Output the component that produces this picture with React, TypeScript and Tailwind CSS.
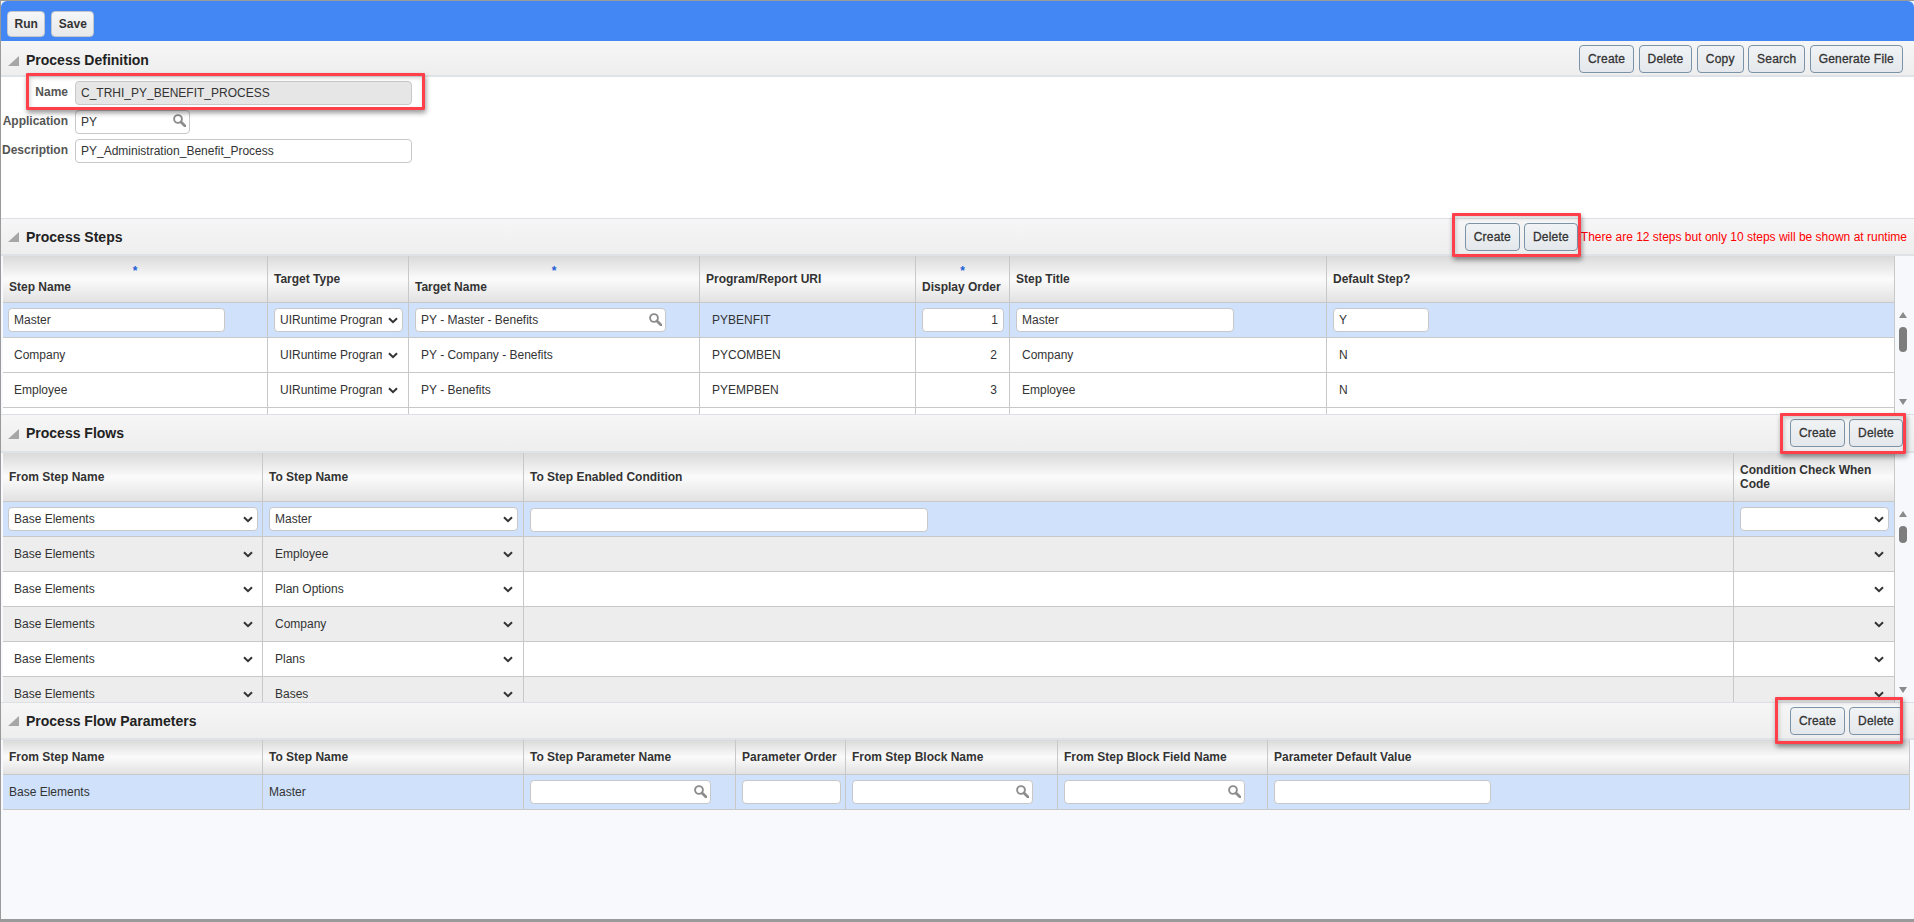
import type { ReactNode } from 'react';

const CELL_LINE = 'border-r border-b border-[#c8c8c8]';
const SELECTED = 'bg-[#cfe1fb]';

function Btn({ children }: { children: ReactNode }) {
  return (
    <button
      type="button"
      className="h-[28px] shrink-0 rounded-[4px] border border-[#7b93a8] bg-gradient-to-b from-[#f1f3f5] to-[#e4e8ec] px-[8px] text-[12px] tracking-[0.2px] text-[#333] [-webkit-text-stroke:0.3px_#333]"
    >
      {children}
    </button>
  );
}

function TopBtn({ children }: { children: ReactNode }) {
  return (
    <button
      type="button"
      className="h-[26px] rounded-[4px] border border-[#c4c8cc] bg-gradient-to-b from-[#f5f6f7] to-[#e6e8ea] px-[6.5px] text-[12px] font-bold text-[#333]"
    >
      {children}
    </button>
  );
}

function Arrow() {
  return (
    <svg width="11" height="10" viewBox="0 0 11 10" className="shrink-0">
      <polygon points="11,0 11,10 0,10" fill="#a6a6a6" />
    </svg>
  );
}

function SearchIcon() {
  return (
    <svg width="13" height="13" viewBox="0 0 13 13" className="absolute right-[4px] top-[5px]">
      <circle cx="5" cy="5" r="3.9" fill="none" stroke="#8c8c8c" strokeWidth="1.9" />
      <line x1="8" y1="8" x2="12" y2="12" stroke="#8c8c8c" strokeWidth="2.8" strokeLinecap="round" />
    </svg>
  );
}

function Chevron({ className = '' }: { className?: string }) {
  return (
    <svg width="10" height="7" viewBox="0 0 10 7" className={`shrink-0 ${className}`}>
      <path d="M1 1.2 L5 5.2 L9 1.2" fill="none" stroke="#333" strokeWidth="2" />
    </svg>
  );
}

function Field({
  value = '',
  width,
  search,
  right,
  disabled,
}: {
  value?: string;
  width: string;
  search?: boolean;
  right?: boolean;
  disabled?: boolean;
}) {
  return (
    <div className={`relative h-[24px] ${width}`}>
      <input
        readOnly
        value={value}
        className={`h-full w-full rounded-[4px] border border-[#c8c8c8] px-[5px] text-[12px] text-[#333] outline-none ${
          disabled ? 'bg-[#e6e6e6]' : 'bg-white'
        } ${right ? 'text-right' : ''}`}
      />
      {search && <SearchIcon />}
    </div>
  );
}

// Dropdown: boxed when the row is selected, bare text + chevron otherwise
function Dropdown({ value = '', boxed, width }: { value?: string; boxed?: boolean; width: string }) {
  return (
    <div
      className={`flex h-[24px] items-center rounded-[4px] border pl-[5px] pr-[4px] text-[12px] text-[#333] ${width} ${
        boxed ? 'border-[#c8c8c8] bg-white' : 'border-transparent'
      }`}
    >
      <span className="min-w-0 flex-1 overflow-hidden whitespace-nowrap">{value}</span>
      <Chevron className="ml-[6px]" />
    </div>
  );
}

function SectionBar({
  title,
  height,
  topLine,
  children,
}: {
  title: string;
  height: string;
  topLine?: boolean;
  children?: ReactNode;
}) {
  return (
    <div
      className={`flex shrink-0 items-center justify-between border-b-2 border-[#dfe3e8] bg-gradient-to-b from-[#f6f6f6] to-[#eeeeee] pl-[7px] pr-[11px] ${height} ${
        topLine ? 'border-t border-t-[#dcdfe3]' : 'pt-[2px]'
      }`}
    >
      <div className={`flex items-center gap-[7px] ${topLine ? 'pt-px' : 'pt-[3px]'}`}>
        <Arrow />
        <h2 className="text-[14px] font-bold text-[#222]">{title}</h2>
      </div>
      {children}
    </div>
  );
}

function HeadCell({ children, required }: { children: ReactNode; required?: boolean }) {
  return (
    <th
      className={`${CELL_LINE} bg-gradient-to-b from-[#dadada] via-[#fbfbfb] to-[#e2e2e2] px-[6px] text-left align-middle text-[12px] leading-[14px] font-bold text-[#333]`}
    >
      {required && <div className="h-[16px] text-center text-[12px] leading-[14px] text-[#1f5fd8]">*</div>}
      {children}
    </th>
  );
}

function Scrollbar({ top, thumb }: { top: string; thumb: string }) {
  return (
    <div className={`flex w-[19px] shrink-0 flex-col bg-[#f6f8fc] pb-[9px] pl-[4px] ${top}`}>
      <svg width="8" height="6" viewBox="0 0 8 6">
        <polygon points="4,0 8,6 0,6" fill="#8a8a8a" />
      </svg>
      <div className={`mt-[9px] w-[8px] rounded-full bg-[#7d7d7d] ${thumb}`} />
      <div className="flex-1" />
      <svg width="8" height="6" viewBox="0 0 8 6">
        <polygon points="0,0 8,0 4,6" fill="#8a8a8a" />
      </svg>
    </div>
  );
}

function RedBox({ className }: { className: string }) {
  return (
    <div
      className={`pointer-events-none absolute rounded-[1px] border-[3px] border-[#ff3f49] shadow-[1px_3px_5px_rgba(0,0,0,0.4),inset_1px_2px_4px_rgba(0,0,0,0.18)] ${className}`}
    />
  );
}

const stepRows = [
  { name: 'Company', target: 'PY - Company - Benefits', uri: 'PYCOMBEN', order: '2', title: 'Company', def: 'N' },
  { name: 'Employee', target: 'PY - Benefits', uri: 'PYEMPBEN', order: '3', title: 'Employee', def: 'N' },
];

const flowRows = ['Employee', 'Plan Options', 'Company', 'Plans', 'Bases'];

function StepsTable() {
  return (
    <table className="w-[1892px] table-fixed border-separate border-spacing-0">
      <colgroup>
        <col className="w-[265px]" />
        <col className="w-[141px]" />
        <col className="w-[291px]" />
        <col className="w-[216px]" />
        <col className="w-[94px]" />
        <col className="w-[317px]" />
        <col className="w-[568px]" />
      </colgroup>
      <thead>
        <tr className="h-[47px]">
          <HeadCell required>Step Name</HeadCell>
          <HeadCell>Target Type</HeadCell>
          <HeadCell required>Target Name</HeadCell>
          <HeadCell>Program/Report URI</HeadCell>
          <HeadCell required>Display Order</HeadCell>
          <HeadCell>Step Title</HeadCell>
          <HeadCell>Default Step?</HeadCell>
        </tr>
      </thead>
      <tbody className="text-[12px] text-[#333]">
        <tr className={`h-[35px] ${SELECTED}`}>
          <td className={`${CELL_LINE} pl-[5px]`}><Field value="Master" width="w-[217px]" /></td>
          <td className={`${CELL_LINE} pl-[6px]`}><Dropdown value="UIRuntime Program" boxed width="w-[129px]" /></td>
          <td className={`${CELL_LINE} pl-[6px]`}><Field value="PY - Master - Benefits" search width="w-[251px]" /></td>
          <td className={`${CELL_LINE} pl-[12px]`}>PYBENFIT</td>
          <td className={`${CELL_LINE} pl-[6px]`}><Field value="1" right width="w-[82px]" /></td>
          <td className={`${CELL_LINE} pl-[6px]`}><Field value="Master" width="w-[218px]" /></td>
          <td className={`${CELL_LINE} pl-[6px]`}><Field value="Y" width="w-[96px]" /></td>
        </tr>
        {stepRows.map((row) => (
          <tr key={row.name} className="h-[35px] bg-white">
            <td className={`${CELL_LINE} pl-[11px]`}>{row.name}</td>
            <td className={`${CELL_LINE} pl-[6px]`}><Dropdown value="UIRuntime Program" width="w-[129px]" /></td>
            <td className={`${CELL_LINE} pl-[12px]`}>{row.target}</td>
            <td className={`${CELL_LINE} pl-[12px]`}>{row.uri}</td>
            <td className={`${CELL_LINE} pr-[12px] text-right`}>{row.order}</td>
            <td className={`${CELL_LINE} pl-[12px]`}>{row.title}</td>
            <td className={`${CELL_LINE} pl-[12px]`}>{row.def}</td>
          </tr>
        ))}
        <tr className="h-[35px] bg-white">
          <td className={CELL_LINE} />
          <td className={CELL_LINE} />
          <td className={CELL_LINE} />
          <td className={CELL_LINE} />
          <td className={CELL_LINE} />
          <td className={CELL_LINE} />
          <td className={CELL_LINE} />
        </tr>
      </tbody>
    </table>
  );
}

function FlowsTable() {
  return (
    <table className="w-[1892px] table-fixed border-separate border-spacing-0">
      <colgroup>
        <col className="w-[260px]" />
        <col className="w-[261px]" />
        <col className="w-[1210px]" />
        <col className="w-[161px]" />
      </colgroup>
      <thead>
        <tr className="h-[49px]">
          <HeadCell>From Step Name</HeadCell>
          <HeadCell>To Step Name</HeadCell>
          <HeadCell>To Step Enabled Condition</HeadCell>
          <HeadCell>Condition Check When Code</HeadCell>
        </tr>
      </thead>
      <tbody>
        <tr className={`h-[35px] ${SELECTED}`}>
          <td className={`${CELL_LINE} pl-[5px]`}><Dropdown value="Base Elements" boxed width="w-[250px]" /></td>
          <td className={`${CELL_LINE} pl-[6px]`}><Dropdown value="Master" boxed width="w-[249px]" /></td>
          <td className={`${CELL_LINE} pl-[6px]`}><Field width="w-[398px]" /></td>
          <td className={`${CELL_LINE} pl-[6px]`}><Dropdown boxed width="w-[149px]" /></td>
        </tr>
        {flowRows.map((to, i) => (
          <tr key={to} className={`h-[35px] ${i % 2 === 0 ? 'bg-[#ededed]' : 'bg-white'}`}>
            <td className={`${CELL_LINE} pl-[5px]`}><Dropdown value="Base Elements" width="w-[250px]" /></td>
            <td className={`${CELL_LINE} pl-[6px]`}><Dropdown value={to} width="w-[249px]" /></td>
            <td className={CELL_LINE} />
            <td className={`${CELL_LINE} pl-[6px]`}><Dropdown width="w-[149px]" /></td>
          </tr>
        ))}
      </tbody>
    </table>
  );
}

function ParamsTable() {
  return (
    <table className="w-[1907px] table-fixed border-separate border-spacing-0">
      <colgroup>
        <col className="w-[260px]" />
        <col className="w-[261px]" />
        <col className="w-[212px]" />
        <col className="w-[110px]" />
        <col className="w-[212px]" />
        <col className="w-[210px]" />
        <col className="w-[642px]" />
      </colgroup>
      <thead>
        <tr className="h-[35px]">
          <HeadCell>From Step Name</HeadCell>
          <HeadCell>To Step Name</HeadCell>
          <HeadCell>To Step Parameter Name</HeadCell>
          <HeadCell>Parameter Order</HeadCell>
          <HeadCell>From Step Block Name</HeadCell>
          <HeadCell>From Step Block Field Name</HeadCell>
          <HeadCell>Parameter Default Value</HeadCell>
        </tr>
      </thead>
      <tbody className="text-[12px] text-[#333]">
        <tr className={`h-[35px] ${SELECTED}`}>
          <td className={`${CELL_LINE} pl-[6px]`}>Base Elements</td>
          <td className={`${CELL_LINE} pl-[6px]`}>Master</td>
          <td className={`${CELL_LINE} pl-[6px]`}><Field search width="w-[181px]" /></td>
          <td className={`${CELL_LINE} pl-[6px]`}><Field width="w-[99px]" /></td>
          <td className={`${CELL_LINE} pl-[6px]`}><Field search width="w-[181px]" /></td>
          <td className={`${CELL_LINE} pl-[6px]`}><Field search width="w-[181px]" /></td>
          <td className={`${CELL_LINE} pl-[6px]`}><Field width="w-[217px]" /></td>
        </tr>
      </tbody>
    </table>
  );
}

export default function App() {
  return (
    <div className="relative flex h-[922px] w-[1914px] flex-col overflow-hidden border-t border-l border-b-[3px] border-[#9a9a9a] bg-[#f7f9fc] font-['Liberation_Sans',Arial,sans-serif]">
      <div className="flex h-[40px] shrink-0 items-start gap-[6px] rounded-t-[6px] bg-[#4387f5] pt-[10px] pl-[6px]">
        <TopBtn>Run</TopBtn>
        <TopBtn>Save</TopBtn>
      </div>

      <SectionBar title="Process Definition" height="h-[36px]">
        <div className="flex gap-[4.4px]">
          <Btn>Create</Btn>
          <Btn>Delete</Btn>
          <Btn>Copy</Btn>
          <Btn>Search</Btn>
          <Btn>Generate File</Btn>
        </div>
      </SectionBar>

      <div className="grid h-[141px] shrink-0 grid-cols-[67px_1fr] content-start items-center gap-x-[7px] gap-y-[5px] bg-white pt-[3px]">
        <label className="text-right text-[12px] font-bold text-[#555]">Name</label>
        <Field value="C_TRHI_PY_BENEFIT_PROCESS" disabled width="w-[337px]" />
        <label className="text-right text-[12px] font-bold text-[#555]">Application</label>
        <Field value="PY" search width="w-[115px]" />
        <label className="text-right text-[12px] font-bold text-[#555]">Description</label>
        <Field value="PY_Administration_Benefit_Process" width="w-[337px]" />
      </div>

      <SectionBar title="Process Steps" height="h-[38px]" topLine>
        <div className="flex items-center gap-[4px]">
          <Btn>Create</Btn>
          <Btn>Delete</Btn>
          <span className="-mr-[4px] -ml-px text-[12px] text-[#ff0000]">There are 12 steps but only 10 steps will be shown at runtime</span>
        </div>
      </SectionBar>
      <div className="flex h-[158px] shrink-0">
        <div className="min-w-0 flex-1 overflow-hidden pl-[2px]">
          <StepsTable />
        </div>
        <Scrollbar top="pt-[56px]" thumb="h-[25px]" />
      </div>

      <SectionBar title="Process Flows" height="h-[39px]" topLine>
        <div className="flex gap-[4px]">
          <Btn>Create</Btn>
          <Btn>Delete</Btn>
        </div>
      </SectionBar>
      <div className="flex h-[249px] shrink-0">
        <div className="min-w-0 flex-1 overflow-hidden pl-[2px]">
          <FlowsTable />
        </div>
        <Scrollbar top="pt-[58px]" thumb="h-[17px]" />
      </div>

      <SectionBar title="Process Flow Parameters" height="h-[38px]" topLine>
        <div className="flex gap-[4px]">
          <Btn>Create</Btn>
          <Btn>Delete</Btn>
        </div>
      </SectionBar>
      <div className="min-h-0 flex-1 overflow-hidden pl-[2px]">
        <ParamsTable />
      </div>

      <RedBox className="left-[25px] top-[72px] h-[37px] w-[399px]" />
      <RedBox className="left-[1451px] top-[212px] h-[44px] w-[129px]" />
      <RedBox className="left-[1779px] top-[412px] h-[41px] w-[126px]" />
      <RedBox className="left-[1774px] top-[696px] h-[47px] w-[128px]" />
    </div>
  );
}
